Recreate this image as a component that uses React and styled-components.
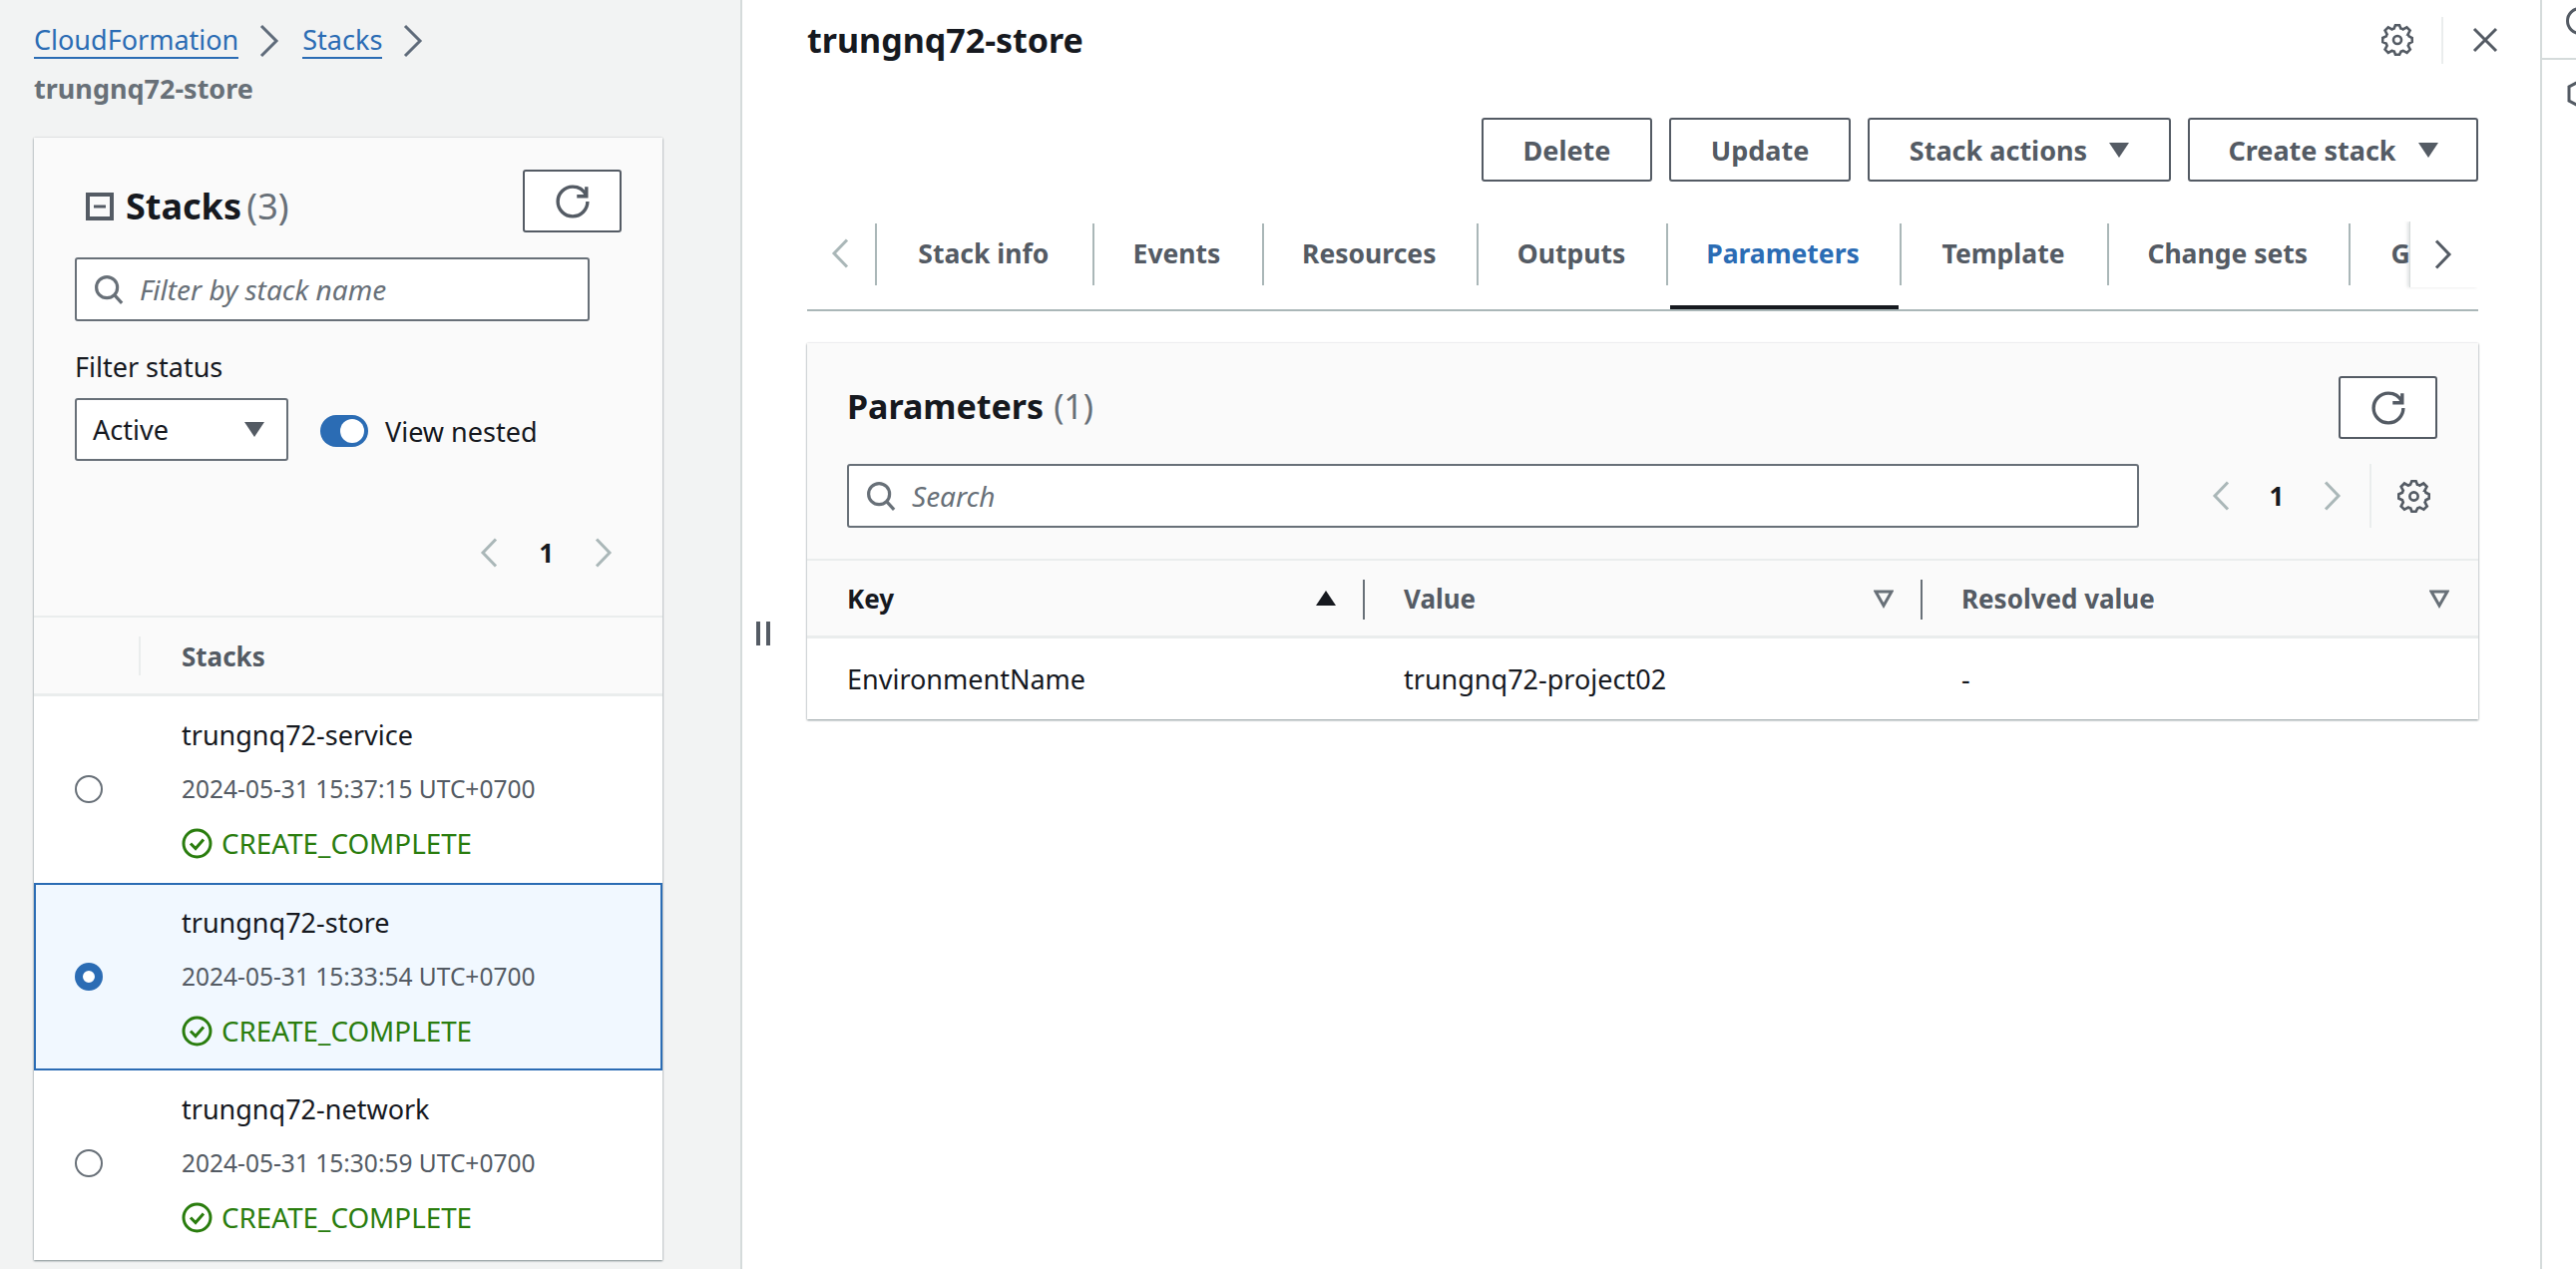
import styled, { createGlobalStyle } from "styled-components";

const GlobalStyle = createGlobalStyle`
  html, body {
    margin: 0;
    padding: 0;
    background: #fff;
    font-family: "Noto Sans", "Open Sans", Arial, sans-serif;
    color: #16191f;
  }
`;

const Page = styled.div`
  display: flex;
  width: 2582px;
  height: 1272px;
  overflow: hidden;
  font-size: 27px;
`;

/* left column */
const Sidebar = styled.aside`
  flex: 0 0 744px;
  box-sizing: border-box;
  height: 100%;
  padding: 20px 78px 0 34px;
  background: #f2f3f3;
  border-right: 2px solid #d5dbdb;
`;

const Crumbs = styled.nav`
  display: flex;
  align-items: center;
  height: 42px;
`;

const CrumbLink = styled.a`
  color: #2b6cb4;
  line-height: 34px;
  border-bottom: 2px solid #2b6cb4;
`;

const CrumbSep = styled.svg`
  width: 22px;
  height: 34px;
  margin: 0 22px 0 20px;
  fill: none;
  stroke: #5f6b7a;
  stroke-width: 3;
`;

const CrumbCurrent = styled.div`
  margin-top: 5px;
  height: 44px;
  line-height: 44px;
  font-weight: 700;
  color: #687078;
`;

const Card = styled.section`
  background: #fafafa;
  box-shadow: 0 1px 2px rgba(0, 28, 36, 0.45), 0 0 2px rgba(0, 28, 36, 0.12);
`;

const SideCard = styled(Card)`
  margin-top: 27px;
  height: 1125px;
  display: flex;
  flex-direction: column;
`;

const SideTop = styled.div`
  flex: none;
  height: 481px;
  box-sizing: border-box;
  padding: 32px 41px 0;
  border-bottom: 2px solid #eaeded;
`;

const SideHeading = styled.div`
  display: flex;
  align-items: center;
  justify-content: space-between;
  height: 63px;
`;

const SideTitle = styled.h2`
  display: flex;
  align-items: center;
  gap: 12px;
  margin: 10px 0 0 11px;
  font-size: 36px;
  font-weight: 700;
  word-spacing: -4px;
`;

const Count = styled.span`
  font-weight: 400;
  color: #687078;
`;

const Button = styled.button`
  display: flex;
  align-items: center;
  justify-content: center;
  gap: 22px;
  box-sizing: border-box;
  width: ${(p) => p.$w}px;
  height: ${(p) => p.$h || 64}px;
  padding: 0;
  background: #fff;
  border: 2px solid #545b64;
  border-radius: 3px;
  color: #545b64;
  font: 700 27px "Noto Sans", sans-serif;
`;

const SearchBox = styled.div`
  display: flex;
  align-items: center;
  gap: 16px;
  box-sizing: border-box;
  width: ${(p) => p.$w}px;
  height: ${(p) => p.$h}px;
  margin-top: ${(p) => p.$top || 0}px;
  padding-left: 17px;
  background: #fff;
  border: 2px solid #687078;
  border-radius: 3px;
  font-size: 28px;
  font-style: italic;
  color: #687078;
`;

const IconSvg = styled.svg`
  flex: none;
  width: ${(p) => p.$size}px;
  height: ${(p) => p.$size}px;
  fill: none;
  stroke: ${(p) => p.$color || "#545b64"};
  stroke-width: ${(p) => p.$stroke || 2};
`;

const FilterLabel = styled.div`
  margin-top: 28px;
  height: 36px;
  line-height: 36px;
`;

const FilterRow = styled.div`
  display: flex;
  align-items: center;
  margin-top: 13px;
`;

const Select = styled.div`
  display: flex;
  align-items: center;
  justify-content: space-between;
  box-sizing: border-box;
  width: 214px;
  height: 63px;
  padding: 0 22px 0 16px;
  background: #fff;
  border: 2px solid #687078;
  border-radius: 3px;
`;

const Caret = styled.span`
  width: 0;
  height: 0;
  border-left: 10px solid transparent;
  border-right: 10px solid transparent;
  border-top: 15px solid #545b64;
`;

const Toggle = styled.span`
  position: relative;
  width: 48px;
  height: 32px;
  margin: 3px 17px 0 32px;
  border-radius: 16px;
  background: #2b6cb4;

  &::after {
    content: "";
    position: absolute;
    top: 4px;
    right: 4px;
    width: 24px;
    height: 24px;
    border-radius: 50%;
    background: #fff;
  }
`;

const ToggleLabel = styled.span`
  margin-top: 3px;
`;

const Pager = styled.div`
  display: flex;
  align-items: center;
  justify-content: flex-end;
  gap: ${(p) => p.$gap}px;
  font-weight: 700;
  font-size: 26px;
`;

const SidePager = styled(Pager)`
  margin: 68px 9px 0 0;
  height: 48px;
`;

const Chevron = styled.svg`
  flex: none;
  width: ${(p) => p.$w || 18}px;
  height: ${(p) => p.$h || 30}px;
  fill: none;
  stroke: ${(p) => (p.$dark ? "#545b64" : "#aab7b8")};
  stroke-width: 3;
`;

const StackHead = styled.div`
  flex: none;
  display: flex;
  align-items: center;
  height: 79px;
  box-sizing: border-box;
  padding-top: 1px;
  border-bottom: 3px solid #eaeded;
  font-size: 26px;
  font-weight: 700;
  color: #545b64;
`;

const HeadRule = styled.span`
  width: 2px;
  height: 39px;
  margin: 0 41px 0 105px;
  background: #eaeded;
`;

const StackList = styled.div`
  flex: 1;
  background: #fff;
`;

const StackRow = styled.div`
  display: flex;
  align-items: center;
  box-sizing: border-box;
  height: 188px;
  margin-top: ${(p) => (p.$selected ? 0 : -1)}px;
  padding-left: 39px;
  background: ${(p) => (p.$selected ? "#f1f8ff" : "transparent")};
  border: 2px solid ${(p) => (p.$selected ? "#2b6cb4" : "transparent")};
`;

const Radio = styled.span`
  flex: none;
  box-sizing: border-box;
  width: 28px;
  height: 28px;
  margin-right: 79px;
  border-radius: 50%;
  background: #fff;
  border: ${(p) => (p.$on ? "8px solid #2b6cb4" : "2px solid #687078")};
`;

const StackText = styled.div`
  display: flex;
  flex-direction: column;
  gap: 18px;
`;

const StackLine = styled.div`
  height: 36px;
  line-height: 36px;
  white-space: nowrap;
`;

const StackDate = styled(StackLine)`
  font-size: 24.5px;
  color: #545b64;
`;

const StackStatus = styled(StackLine)`
  display: flex;
  align-items: center;
  gap: 9px;
  font-size: 27.8px;
  color: #2a7d0e;
`;

/* main column */
const Main = styled.main`
  position: relative;
  flex: 0 0 1802px;
  min-width: 0;
  box-sizing: border-box;
  padding: 0 62px 0 65px;
`;

const Handle = styled.div`
  position: absolute;
  left: 14px;
  top: 623px;
  display: flex;
  gap: 6px;

  span {
    width: 4px;
    height: 24px;
    background: #545b64;
  }
`;

const TopBar = styled.header`
  display: flex;
  align-items: center;
  justify-content: space-between;
  height: 80px;
`;

const PageTitle = styled.h1`
  margin: 0;
  font-size: 34px;
  font-weight: 700;
`;

const TopIcons = styled.div`
  display: flex;
  align-items: center;
  margin-right: -20px;
`;

const TopRule = styled.span`
  width: 2px;
  height: 47px;
  margin: 0 29px 0 28px;
  background: #eaeded;
`;

const Actions = styled.div`
  display: flex;
  justify-content: flex-end;
  gap: 17px;
  margin-top: 38px;
`;

const Tabs = styled.div`
  position: relative;
  display: flex;
  align-items: flex-start;
  height: 88px;
  margin-top: 40px;
  padding-left: 24px;
  border-bottom: 2px solid #aab7b8;
  overflow: hidden;
`;

const TabArrow = styled.div`
  flex: none;
  display: flex;
  align-items: center;
  height: 64px;
  width: 44px;
`;

const Tab = styled.div`
  flex: none;
  box-sizing: border-box;
  display: flex;
  align-items: center;
  justify-content: ${(p) => (p.$pad ? "flex-start" : "center")};
  position: relative;
  width: ${(p) => p.$w}px;
  height: 88px;
  padding: 0 0 25px ${(p) => p.$pad || 0}px;
  font-size: 26.5px;
  font-weight: 700;
  white-space: nowrap;
  color: ${(p) => (p.$active ? "#2b6cb4" : "#545b64")};

  &::before {
    content: "";
    position: absolute;
    left: 0;
    top: 2px;
    width: 2px;
    height: 62px;
    background: #aab7b8;
  }

  &::after {
    content: "";
    display: ${(p) => (p.$active ? "block" : "none")};
    position: absolute;
    left: 4px;
    right: 1px;
    bottom: 0;
    height: 4px;
    background: #16191f;
  }
`;

const TabEnd = styled.div`
  position: absolute;
  right: 0;
  top: 0;
  width: 69px;
  height: 66px;
  box-sizing: border-box;
  padding-right: 26px;
  display: flex;
  align-items: center;
  justify-content: flex-end;
  background: #fff;
  border-left: 1px solid #d5dbdb;
  box-shadow: -2px 0 3px rgba(0, 28, 36, 0.12);
`;

const ParamCard = styled(Card)`
  margin-top: 32px;
  height: 377px;
`;

const ParamHead = styled.div`
  height: 218px;
  box-sizing: border-box;
  padding: 33px 41px 0 40px;
  border-bottom: 2px solid #eaeded;
`;

const ParamTitleRow = styled.div`
  display: flex;
  align-items: center;
  justify-content: space-between;
  height: 63px;
`;

const ParamTitle = styled.h2`
  display: flex;
  gap: 10px;
  margin: -4px 0 0;
  font-size: 34px;
  font-weight: 700;
`;

const ParamTools = styled.div`
  display: flex;
  align-items: center;
  margin-top: 25px;
`;

const ParamPager = styled(Pager)`
  margin-left: 73px;
  width: 130px;
  justify-content: space-between;
`;

const ToolRule = styled.span`
  width: 2px;
  height: 64px;
  margin: 0 26px 0 28px;
  background: #eaeded;
`;

const TableHead = styled.div`
  display: grid;
  grid-template-columns: 559px 559px 1fr;
  height: 78px;
  border-bottom: 3px solid #eaeded;
  box-sizing: border-box;
`;

const HeadCell = styled.div`
  display: flex;
  align-items: center;
  justify-content: space-between;
  box-sizing: border-box;
  position: relative;
  padding-left: ${(p) => (p.$first ? 40 : 39)}px;
  padding-right: 29px;
  font-size: 26px;
  font-weight: 700;
  color: ${(p) => (p.$first ? "#16191f" : "#545b64")};

  &:not(:last-child)::after {
    content: "";
    position: absolute;
    right: 0;
    top: 19px;
    width: 2px;
    height: 40px;
    background: #687078;
  }
`;

const TableRow = styled.div`
  display: grid;
  grid-template-columns: 559px 559px 1fr;
  align-items: center;
  height: 81px;
  background: #fff;
`;

const Cell = styled.div`
  padding-left: ${(p) => (p.$first ? 40 : 39)}px;
`;

const SortUp = styled.span`
  width: 0;
  height: 0;
  border-left: 10px solid transparent;
  border-right: 10px solid transparent;
  border-bottom: 15px solid #16191f;
`;

/* right rail */
const Rail = styled.aside`
  flex: 0 0 36px;
  box-sizing: border-box;
  border-left: 2px solid #d5dbdb;
  overflow: hidden;
`;

const RailCell = styled.div`
  height: ${(p) => p.$h}px;
  box-sizing: border-box;
  padding: ${(p) => p.$pad}px 0 0 24px;
  border-bottom: ${(p) => (p.$line ? "2px solid #d5dbdb" : "none")};
`;

const Refresh = ({ size = 34 }) => (
  <IconSvg $size={size} viewBox="0 0 16 16" $stroke={1.6}>
    <path d="M15 8c0 3.87-3.13 7-7 7s-7-3.13-7-7 3.13-7 7-7c2.79 0 5.2 1.63 6.33 4" />
    <path d="M14.5 1v4.5H10" />
  </IconSvg>
);

const Search = () => (
  <IconSvg $size={30} viewBox="0 0 16 16" $color="#687078" $stroke={1.7}>
    <circle cx="7" cy="7" r="5.6" />
    <path d="M11 11l4 4.4" />
  </IconSvg>
);

const Gear = ({ size = 33 }) => (
  <IconSvg $size={size} viewBox="0 0 16 16" $stroke={1.3}>
    <path d="m13.3 5.2 1-1.9-1.6-1.6-1.9 1c-.3-.2-.7-.3-1.1-.4L9 .6H7l-.7 1.7c-.3.1-.7.2-1 .4l-1.9-1-1.6 1.6 1 1.9c-.2.3-.3.7-.4 1L.6 7v2l1.8.8c.1.4.3.7.4 1.1l-1 1.9 1.6 1.6 1.9-1c.3.2.7.3 1.1.4L7 15.4h2l.8-1.6c.4-.1.7-.3 1.1-.4l1.9 1 1.6-1.6-1-1.9c.2-.3.3-.7.4-1.1l1.6-.8V7l-1.6-.8c-.1-.3-.3-.7-.4-1Z" />
    <circle cx="8" cy="8" r="2" />
  </IconSvg>
);

const Left = ({ dark, w, h }) => (
  <Chevron $dark={dark} $w={w} $h={h} viewBox="0 0 18 30">
    <path d="M16 1.5 3 15l13 13.5" />
  </Chevron>
);

const Right = ({ dark, w, h }) => (
  <Chevron $dark={dark} $w={w} $h={h} viewBox="0 0 18 30">
    <path d="M2 1.5 15 15 2 28.5" />
  </Chevron>
);

const FilterCaret = () => (
  <IconSvg $size={20} viewBox="0 0 20 20" $stroke={3} $color="#687078">
    <path d="M2 3h16l-8 14z" />
  </IconSvg>
);

const Status = () => (
  <StackStatus>
    <IconSvg $size={31} viewBox="0 0 31 31" $color="#2a7d0e" $stroke={3}>
      <circle cx="15.5" cy="15.5" r="13.5" />
      <path d="M9 15.5l5 5 8-9" />
    </IconSvg>
    CREATE_COMPLETE
  </StackStatus>
);

const stacks = [
  { name: "trungnq72-service", date: "2024-05-31 15:37:15 UTC+0700" },
  { name: "trungnq72-store", date: "2024-05-31 15:33:54 UTC+0700", selected: true },
  { name: "trungnq72-network", date: "2024-05-31 15:30:59 UTC+0700" },
];

const tabs = [
  { label: "Stack info", w: 217.5 },
  { label: "Events", w: 170 },
  { label: "Resources", w: 215.5 },
  { label: "Outputs", w: 190 },
  { label: "Parameters", w: 234, active: true },
  { label: "Template", w: 208 },
  { label: "Change sets", w: 241.5 },
];

export default function App() {
  return (
    <>
      <GlobalStyle />
      <Page>
        <Sidebar>
          <Crumbs>
            <CrumbLink>CloudFormation</CrumbLink>
            <CrumbSep viewBox="0 0 22 34">
              <path d="M3 2l15 15L3 32" />
            </CrumbSep>
            <CrumbLink>Stacks</CrumbLink>
            <CrumbSep viewBox="0 0 22 34">
              <path d="M3 2l15 15L3 32" />
            </CrumbSep>
          </Crumbs>
          <CrumbCurrent>trungnq72-store</CrumbCurrent>
          <SideCard>
            <SideTop>
              <SideHeading>
                <SideTitle>
                  <IconSvg $size={28} viewBox="0 0 28 28" $stroke={4} $color="#545b64">
                    <rect x="2" y="2" width="24" height="24" />
                    <path d="M8 14h12" strokeWidth="3" />
                  </IconSvg>
                  <span>
                    Stacks <Count>(3)</Count>
                  </span>
                </SideTitle>
                <Button $w={99} $h={63}>
                  <Refresh />
                </Button>
              </SideHeading>
              <SearchBox $w={516} $h={64} $top={25}>
                <Search />
                Filter by stack name
              </SearchBox>
              <FilterLabel>Filter status</FilterLabel>
              <FilterRow>
                <Select>
                  Active
                  <Caret />
                </Select>
                <Toggle />
                <ToggleLabel>View nested</ToggleLabel>
              </FilterRow>
              <SidePager $gap={41}>
                <Left />
                1
                <Right />
              </SidePager>
            </SideTop>
            <StackHead>
              <HeadRule />
              Stacks
            </StackHead>
            <StackList>
              {stacks.map((s) => (
                <StackRow key={s.name} $selected={s.selected}>
                  <Radio $on={s.selected} />
                  <StackText>
                    <StackLine>{s.name}</StackLine>
                    <StackDate>{s.date}</StackDate>
                    <Status />
                  </StackText>
                </StackRow>
              ))}
            </StackList>
          </SideCard>
        </Sidebar>

        <Main>
          <Handle>
            <span />
            <span />
          </Handle>
          <TopBar>
            <PageTitle>trungnq72-store</PageTitle>
            <TopIcons>
              <Gear size={32} />
              <TopRule />
              <IconSvg $size={26} viewBox="0 0 26 26" $stroke={3}>
                <path d="M2 2l22 22M24 2L2 24" />
              </IconSvg>
            </TopIcons>
          </TopBar>
          <Actions>
            <Button $w={171}>Delete</Button>
            <Button $w={182}>Update</Button>
            <Button $w={304}>
              Stack actions
              <Caret />
            </Button>
            <Button $w={291}>
              Create stack
              <Caret />
            </Button>
          </Actions>
          <Tabs>
            <TabArrow>
              <Left />
            </TabArrow>
            {tabs.map((t) => (
              <Tab key={t.label} $w={t.w} $active={t.active}>
                {t.label}
              </Tab>
            ))}
            <Tab $w={180} $pad={43}>
              Git sync
            </Tab>
            <TabEnd>
              <Right dark />
            </TabEnd>
          </Tabs>
          <ParamCard>
            <ParamHead>
              <ParamTitleRow>
                <ParamTitle>
                  Parameters <Count>(1)</Count>
                </ParamTitle>
                <Button $w={99} $h={63}>
                  <Refresh />
                </Button>
              </ParamTitleRow>
              <ParamTools>
                <SearchBox $w={1295} $h={64}>
                  <Search />
                  Search
                </SearchBox>
                <ParamPager $gap={0}>
                  <Left />
                  1
                  <Right />
                </ParamPager>
                <ToolRule />
                <Gear />
              </ParamTools>
            </ParamHead>
            <TableHead>
              <HeadCell $first>
                Key
                <SortUp />
              </HeadCell>
              <HeadCell>
                Value
                <FilterCaret />
              </HeadCell>
              <HeadCell>
                Resolved value
                <FilterCaret />
              </HeadCell>
            </TableHead>
            <TableRow>
              <Cell $first>EnvironmentName</Cell>
              <Cell>trungnq72-project02</Cell>
              <Cell>-</Cell>
            </TableRow>
          </ParamCard>
        </Main>

        <Rail>
          <RailCell $h={60} $pad={6} $line>
            <IconSvg $size={28} viewBox="0 0 28 28" $stroke={3}>
              <circle cx="14" cy="14" r="12.5" />
            </IconSvg>
          </RailCell>
          <RailCell $h={80} $pad={18}>
            <IconSvg $size={32} viewBox="0 0 32 32" $stroke={3}>
              <path d="M16 2l13 7v14l-13 7-13-7V9z" />
            </IconSvg>
          </RailCell>
        </Rail>
      </Page>
    </>
  );
}
